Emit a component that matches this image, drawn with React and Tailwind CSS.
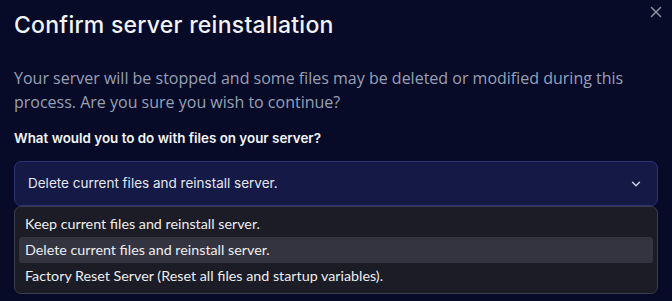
import { X, ChevronDown } from 'lucide-react'

const options = [
  'Keep current files and reinstall server.',
  'Delete current files and reinstall server.',
  'Factory Reset Server (Reset all files and startup variables).',
]

export default function App() {
  const selected = 1

  return (
    <div className="w-[672px] h-[301px] bg-[#070b27] relative overflow-hidden font-['Inter',sans-serif]">
      <button className="absolute right-[7px] top-[3px] text-[#8b8fa6]">
        <X size={18} strokeWidth={2} />
      </button>

      <div className="px-[14px] pt-[10px]">
        <h2 className="text-[23px] leading-[31px] font-medium text-[#f1f3f8] tracking-[0.25px]">
          Confirm server reinstallation
        </h2>

        <p className="mt-[25px] text-[16px] leading-[24px] text-[#98a0b6] font-['Open_Sans',sans-serif]">
          Your server will be stopped and some files may be deleted or modified during this
          process. Are you sure you wish to continue?
        </p>

        <div className="mt-[14px] text-[13.4px] leading-[20px] font-semibold text-[#f4f5f9]">
          What would you to do with files on your server?
        </div>

        <div className="mt-[13px] h-[45px] rounded-[7px] border border-[#2a3373] bg-[#141a45] flex items-center justify-between pl-[13px] pr-[14px]">
          <span className="text-[13.5px] text-[#e3e6f0]">Delete current files and reinstall server.</span>
          <ChevronDown size={14} strokeWidth={2.5} className="text-[#c9cde0]" />
        </div>

        <div className="rounded-[7px] border border-[#3a3c49] bg-[#1b1c25] p-[4px] font-['Lato',sans-serif]">
          {options.map((o, i) => (
            <div
              key={o}
              className={`h-[26px] px-[6px] flex items-center text-[14.3px] text-[#eceef2] rounded-[3px] ${i === selected ? 'bg-[#33343f]' : ''}`}
            >
              {o}
            </div>
          ))}
        </div>
      </div>
    </div>
  )
}
